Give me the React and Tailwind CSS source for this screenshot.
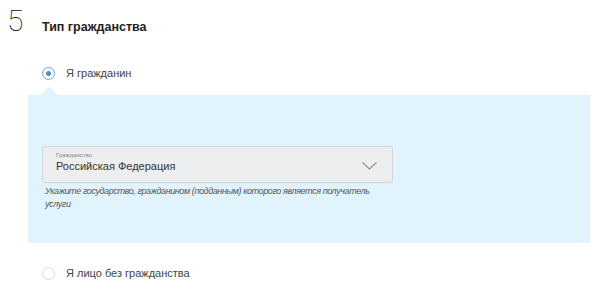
export default function App() {
  return (
    <div className="w-[600px] h-[295px] bg-white overflow-hidden text-[#333]" style={{ fontFamily: '"Liberation Sans", Arial, sans-serif' }}>
      <div className="flex items-start pt-[3px]">
        <div className="w-[42px] pl-[7px] text-[30px] font-thin leading-[36px] text-[#111]" style={{ fontFamily: 'Roboto, "Open Sans", sans-serif' }}>5</div>
        <h2 className="mt-[16px] text-[12.5px] font-bold leading-[16px] text-[#222]">Тип гражданства</h2>
      </div>

      <label className="ml-[42px] mt-[27px] flex items-center gap-[11px] h-[14px]">
        <span className="w-[13px] h-[13px] rounded-full border-[1.5px] border-[#6aa8d8] bg-white flex items-center justify-center">
          <span className="w-[5px] h-[5px] rounded-full bg-[#4a90c8]" />
        </span>
        <span className="text-[11px] text-[#444]">Я гражданин</span>
      </label>

      <div className="relative mt-[15px] ml-[28px] w-[562px] h-[148px] bg-[#e1f4fd] pt-[51px] pl-[14px]">
        <div className="absolute left-[15px] top-[-6px] w-[12px] h-[12px] bg-[#e1f4fd] rotate-45" />
        <div className="relative w-[351px] h-[37px] rounded-[3px] border border-[#d2d6da] bg-[#eceef0] pl-[13px] pt-[4px]">
          <div className="text-[6px] leading-[8px] text-[#888]">Гражданство</div>
          <div className="text-[11px] leading-[14px] text-[#333]">Российская Федерация</div>
          <svg className="absolute right-[15px] top-[15px]" width="15" height="8" viewBox="0 0 15 8" fill="none">
            <polyline points="0.5,0.5 7.5,7 14.5,0.5" stroke="#8a8f94" strokeWidth="1.1" />
          </svg>
        </div>
        <p className="mt-[2px] ml-[3px] w-[340px] text-[9px] italic tracking-[-0.4px] leading-[13px] text-[#555]">
          Укажите государство, гражданином (подданным) которого является получатель услуги
        </p>
      </div>

      <label className="ml-[42px] mt-[23px] flex items-center gap-[11px] h-[14px]">
        <span className="w-[13px] h-[13px] rounded-full border border-[#dcdcdc] bg-white" />
        <span className="text-[11px] text-[#444]">Я лицо без гражданства</span>
      </label>
    </div>
  );
}
